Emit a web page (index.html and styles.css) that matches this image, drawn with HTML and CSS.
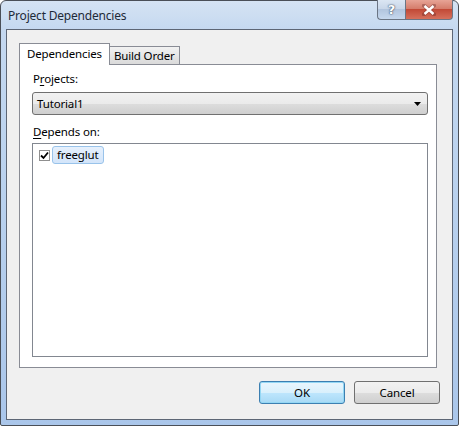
FILE: index.html
```html
<!DOCTYPE html>
<html>
<head>
<meta charset="utf-8">
<link rel="stylesheet" href="styles.css">
</head>
<body>
<div class="window">
  <div class="titlebar">
    <div class="title">Project Dependencies</div>
    <div class="caption-buttons">
      <div class="cap-btn help"><span>?</span></div>
      <div class="cap-btn close">
        <svg width="14" height="12" viewBox="0 0 14 12"><path d="M2 1.5 L12 10.5 M12 1.5 L2 10.5" stroke="#5a2020" stroke-width="4" stroke-linecap="square" opacity="0.35"/><path d="M2.5 2 L11.5 10 M11.5 2 L2.5 10" stroke="#ffffff" stroke-width="2.4" stroke-linecap="butt"/></svg>
      </div>
    </div>
  </div>
  <div class="client">
    <div class="tabs">
      <div class="tab active">Dependencies</div>
      <div class="tab">Build Order</div>
    </div>
    <div class="panel">
      <div class="label">P<u>r</u>ojects:</div>
      <div class="combo">
        <span>Tutorial1</span>
        <svg class="arrow" width="7" height="4" viewBox="0 0 7 4"><path d="M0 0 H7 L3.5 4 Z" fill="#000"/></svg>
      </div>
      <div class="label label2"><u>D</u>epends on:</div>
      <div class="list">
        <div class="item">
          <span class="check"><svg width="9" height="9" viewBox="0 0 9 9"><path d="M1 4.5 L3.5 7 L8 1.5" stroke="#000" stroke-width="1.8" fill="none"/></svg></span>
          <span class="item-text">freeglut</span>
        </div>
      </div>
    </div>
    <div class="buttons">
      <div class="btn default">OK</div>
      <div class="btn">Cancel</div>
    </div>
  </div>
</div>
</body>
</html>
```

FILE: styles.css
```css
html, body {
  margin: 0;
  padding: 0;
  background: #ffffff;
}
body {
  width: 459px;
  height: 426px;
  font-family: "Noto Sans", "Open Sans", sans-serif;
  font-size: 11.5px;
  letter-spacing: -0.15px;
  color: #000;
}
.window {
  box-sizing: border-box;
  width: 459px;
  height: 426px;
  border: 1px solid #4a4f57;
  border-radius: 6px 6px 2px 2px;
  background: linear-gradient(to bottom, #d5e3f3 0px, #c4d8f0 30px, #b9d1ee 200px, #aac6ea 426px);
  display: flex;
  flex-direction: column;
  padding: 0 5px 5px 5px;
}
.titlebar {
  height: 28px;
  display: flex;
  align-items: flex-start;
  justify-content: space-between;
  flex: none;
}
.title {
  padding-top: 6px;
  padding-left: 2px;
  font-size: 12px;
  letter-spacing: -0.2px;
  color: #1e2a38;
}
.caption-buttons {
  display: flex;
  margin-top: -1px;
}
.cap-btn {
  height: 20px;
  display: flex;
  align-items: center;
  justify-content: center;
  box-sizing: border-box;
  border: 1px solid #6b7584;
  border-top: none;
}
.help {
  width: 28px;
  border-radius: 0 0 0 4px;
  background: linear-gradient(to bottom, #dbe6f3 0%, #c9d7e9 45%, #b2c5de 50%, #c6d8ee 100%);
  border-right: none;
}
.help span {
  font-family: "DejaVu Sans", sans-serif;
  font-weight: bold;
  font-size: 13px;
  color: #ffffff;
  text-shadow: 0 0 2px #35465e, 0 0 1px #35465e;
  line-height: 1;
}
.close {
  width: 48px;
  border-radius: 0 0 4px 0;
  background: linear-gradient(to bottom, #e7a496 0%, #d57d6c 45%, #c24a37 50%, #d6705c 100%);
}
.client {
  flex: 1;
  border: 1px solid #5d6675;
  background: #f0f0f0;
  display: flex;
  flex-direction: column;
  padding: 13px 15px 0 12px;
}
.tabs {
  display: flex;
  align-items: flex-end;
  height: 21px;
  position: relative;
  z-index: 1;
}
.tab {
  box-sizing: border-box;
  height: 18px;
  padding: 0 4px 0 4px;
  border: 1px solid #898c95;
  border-bottom: none;
  background: linear-gradient(to bottom, #f2f2f2, #dadada);
  line-height: 17px;
  margin-left: -1px;
}
.tab.active {
  height: 22px;
  margin-bottom: -1px;
  margin-left: 0;
  background: #ffffff;
  padding: 0 7px 0 7px;
  line-height: 19px;
  position: relative;
  z-index: 2;
}
.panel {
  box-sizing: border-box;
  height: 304px;
  border: 1px solid #898c95;
  background: #ffffff;
  padding: 6px 8px 10px 12px;
  display: flex;
  flex-direction: column;
}
.label {
  height: 16px;
  line-height: 16px;
  padding-left: 1px;
  margin-bottom: 5px;
}
.label u {
  text-underline-offset: 2px;
}
.combo {
  box-sizing: border-box;
  height: 23px;
  border: 1px solid #707070;
  border-radius: 3px;
  background: linear-gradient(to bottom, #f2f2f2 0%, #ebebeb 50%, #dddddd 51%, #cfcfcf 100%);
  display: flex;
  align-items: center;
  justify-content: space-between;
  padding: 0 6px 0 4px;
}
.arrow {
  margin-top: 1px;
}
.label2 {
  margin-top: 9px;
  margin-bottom: 3px;
}
.list {
  box-sizing: border-box;
  flex: 1;
  border: 1px solid #828790;
  background: #ffffff;
  padding: 2px 0 0 6px;
}
.item {
  display: flex;
  align-items: center;
  height: 18px;
}
.check {
  box-sizing: border-box;
  width: 11px;
  height: 11px;
  border: 1px solid #8f8f8f;
  background: #fff;
  display: flex;
  align-items: center;
  justify-content: center;
}
.item-text {
  margin-left: 2px;
  box-sizing: border-box;
  height: 18px;
  line-height: 16px;
  padding: 0 4px 0 4px;
  border: 1px solid #99c3ea;
  border-radius: 3px;
  background: linear-gradient(to bottom, #e6f0fc, #d3e5fa);
}
.buttons {
  display: flex;
  justify-content: flex-end;
  gap: 9px;
  margin-top: 13px;
  margin-right: -3px;
}
.btn {
  box-sizing: border-box;
  width: 86px;
  height: 23px;
  border: 1px solid #707070;
  border-radius: 3px;
  background: linear-gradient(to bottom, #f2f2f2 0%, #ebebeb 50%, #dddddd 51%, #cfcfcf 100%);
  display: flex;
  align-items: center;
  justify-content: center;
}
.btn.default {
  border-color: #3c7fb1;
  box-shadow: inset 0 0 0 1px #94d7f4;
  background: linear-gradient(to bottom, #eaf6fd 0%, #d9f0fc 50%, #bee6fd 51%, #a7d9f5 100%);
}
```
